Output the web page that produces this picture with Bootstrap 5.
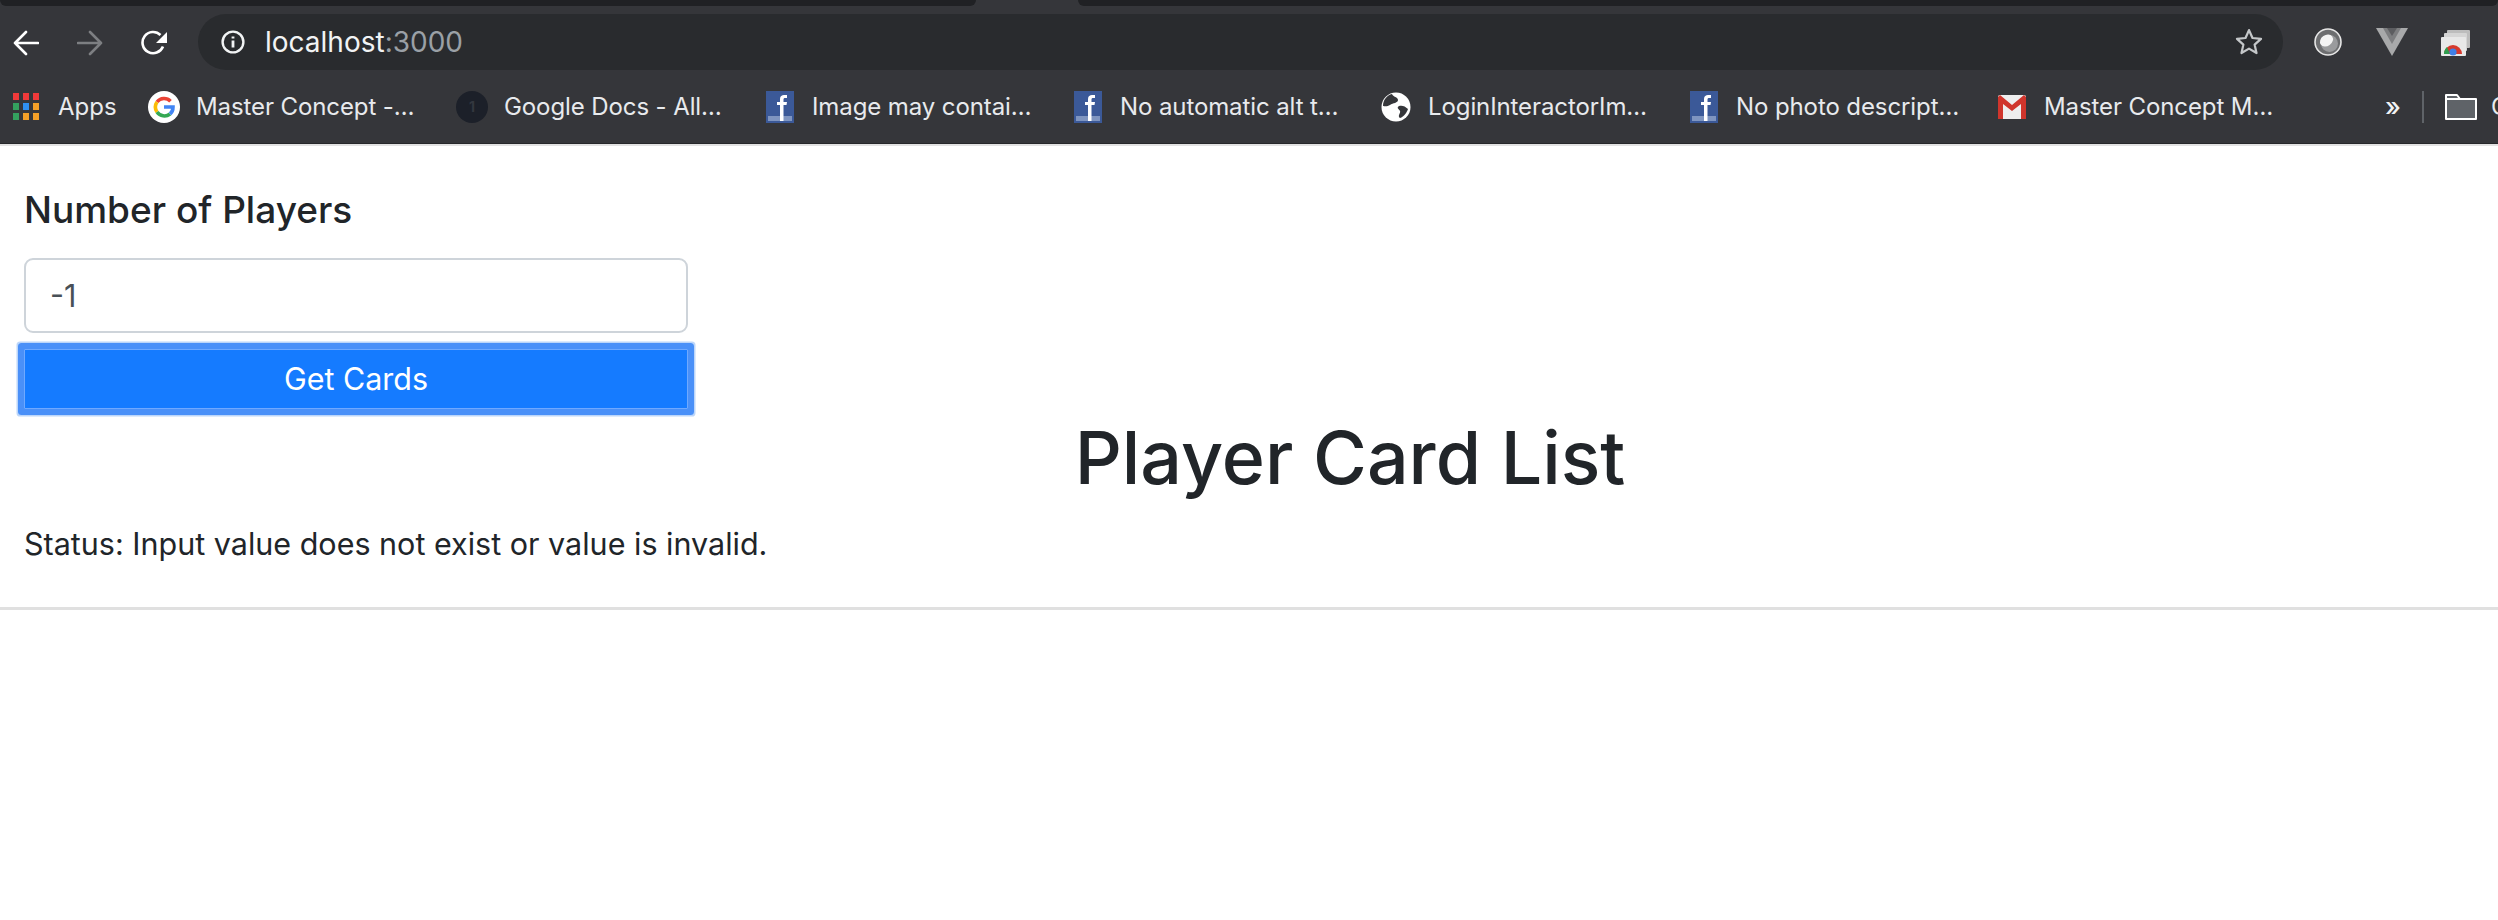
<!DOCTYPE html>
<html lang="en">
<head>
  <meta charset="UTF-8" />
  <title>localhost:3000</title>
  <link href="https://cdn.jsdelivr.net/npm/bootstrap@5.3.2/dist/css/bootstrap.min.css" rel="stylesheet" />
  <style>
    html, body { height: 100%; margin: 0; overflow: hidden; background: #fff; font-family: "Inter", "Liberation Sans", sans-serif; color: #212529; }
    /* browser chrome */
    .tab-strip { height: 6px; background: #35363a; gap: 102px; }
    .tab-dark { height: 6px; background: #202124; border-radius: 0 0 10px 10px; }
    .tab-left { width: 976px; flex: none; }
    .tool-row { height: 64px; background: #35363a; padding-top: 8px; }
    .nav-ico { width: 26px; height: 26px; flex: none; margin-left: 13px; margin-right: 25px; }
    .omni { width: 2085px; margin-left: 6px; height: 56px; flex: none; background: #292b2e; border-radius: 28px; padding-left: 23px; padding-right: 19px; font-size: 28px; color: #f1f3f4; }
    .omni-port { color: #9aa0a6; }
    .ext-ico { flex: none; }
    .book-row { height: 73px; background: #35363a; padding-left: 13px; font-size: 24px; color: #e8eaed; white-space: nowrap; overflow: hidden; }
    .book-apps { width: 135px; flex: none; gap: 19px; }
    .book-item { width: 308px; flex: none; gap: 16px; }
    .book-label { letter-spacing: -0.1px; }
    .book-ico { width: 32px; height: 32px; flex: none; }
    .book-more { margin-left: 81px; width: 37px; flex: none; font-size: 26px; font-weight: 500; color: #f1f3f4; }
    .book-sep { width: 2px; height: 32px; background: #5f6368; flex: none; }
    .book-folder { margin-left: 21px; gap: 14px; flex: none; }
    .chrome-edge { height: 3px; background: #e2e2e2; border-top: 1px solid #26272a; }
    /* page */
    .page-wrap { padding: 37px 24px 0; }
    .form-side { width: 664px; }
    .players-label { font-size: 37px; line-height: 54px; font-weight: 500; margin-bottom: 21px; display: block; }
    .players-input { height: 75px; font-size: 30.5px; padding: 0 24px; border: 2px solid #ced4da; border-radius: 9px; color: #495057; box-shadow: none; }
    .cards-btn { height: 60px; margin-top: 16px; font-size: 30.5px; line-height: 1; background: #157bff; border: 1px solid #6fa9ff; border-radius: 1px; color: #fff; box-shadow: 0 0 0 6px #4a90f8, 0 0 0 7.5px #bcd6fa; }
    .cards-btn:hover { background: #157bff; color: #fff; }
    .title-line { font-size: 73.5px; line-height: 96px; font-weight: 500; margin: 1px 0 0; padding-left: 202px; text-align: center; }
    .status-line { font-size: 30.5px; line-height: 48px; margin: 14px 0 0; }
    .page-rule { margin: 39px 0 0; border: 0; border-top: 3px solid #e0e0e0; opacity: 1; }
  </style>
</head>
<body>
  <div class="tab-strip d-flex">
    <div class="tab-dark tab-left"></div>
    <div class="tab-dark flex-grow-1"></div>
  </div>
  <div class="tool-row d-flex align-items-start">
    <svg class="nav-ico mt-3" viewBox="0 0 26 26" fill="none" stroke="#fff" stroke-width="2.6" stroke-linecap="round" stroke-linejoin="round"><path d="M25 13H2M13 2 2 13l11 11"/></svg>
    <svg class="nav-ico mt-3" viewBox="0 0 26 26" fill="none" stroke="#7d7f82" stroke-width="2.6" stroke-linecap="round" stroke-linejoin="round"><path d="M1 13h23M13 2l11 11-11 11"/></svg>
    <svg class="nav-ico mt-3" viewBox="0 0 26 26" fill="none"><path d="M22 16.5A10.6 10.6 0 1 1 19.5 5" stroke="#fff" stroke-width="2.6"/><path d="M27 1v12H15z" fill="#fff"/></svg>
    <div class="omni d-flex align-items-center">
      <svg width="24" height="24" viewBox="0 0 24 24" fill="none" class="me-3"><circle cx="12" cy="12" r="10.4" stroke="#f1f3f4" stroke-width="2.4"/><path d="M12 10.5v7M12 6.5v2" stroke="#f1f3f4" stroke-width="2.8"/></svg>
      <span class="ms-1">localhost<span class="omni-port">:3000</span></span>
      <svg class="ms-auto" width="30" height="30" viewBox="0 0 24 24" fill="none" stroke="#c4c7c9" stroke-width="1.8" stroke-linejoin="round"><path d="m12 2.5 2.8 6.3 6.8.7-5.1 4.600 1.500 6.700L12 17.300l-6 3.500 1.500-6.700-5.100-4.600 6.800-.7z"/></svg>
    </div>
    <svg class="ext-ico" style="margin-left:31px;margin-top:14px" width="28" height="28" viewBox="0 0 28 28"><circle cx="14" cy="14" r="13" fill="#6d6e70" stroke="#e6e6e6" stroke-width="1.6"/><circle cx="15.5" cy="15.5" r="8.5" fill="#9a9b9d"/><ellipse cx="12.5" cy="12.5" rx="7" ry="5.5" fill="#f4f4f4" transform="rotate(-35 12.5 12.5)"/></svg>
    <svg class="ext-ico" style="margin-left:34px;margin-top:14px" width="32" height="28" viewBox="0 0 32 28"><path d="M0 0h32L16 28z" fill="#a8a9aa"/><path d="M7 0h18l-9 16z" fill="#7d7e80"/><path d="M11 0h10l-5 8z" fill="#35363a" opacity=".45"/></svg>
    <svg class="ext-ico" style="margin-left:33px;margin-top:15px" width="30" height="27" viewBox="0 0 30 27"><rect x="6" y="1" width="23" height="18" rx="1" fill="#bdbdbd"/><rect x="3" y="4" width="23" height="18" rx="1" fill="#d5d5d5"/><rect y="8" width="25" height="19" rx="1" fill="#e8e8e8"/><path d="M3 25a9 9 0 0 1 18 0z" fill="#d6392d"/><path d="M3 25a9 9 0 0 1 3-7l3 7z" fill="#2f9e4f"/><path d="M15 25a3 3 0 1 0-6 0z" fill="#fff"/><circle cx="12" cy="23" r="3.6" fill="#3f7fe6"/></svg>
  </div>
  <div class="book-row d-flex align-items-center">
    <div class="book-apps d-flex align-items-center">
      <svg width="26" height="27" viewBox="0 0 26 27">
        <rect width="6" height="7" fill="#f03a3a"/><rect x="10" width="6" height="7" fill="#f03a3a"/><rect x="20" width="6" height="7" fill="#f03a3a"/>
        <rect y="10" width="6" height="7" fill="#34a05f"/><rect x="10" y="10" width="6" height="7" fill="#2f8ff0"/><rect x="20" y="10" width="6" height="7" fill="#f4a028"/>
        <rect y="20" width="6" height="7" fill="#34a05f"/><rect x="10" y="20" width="6" height="7" fill="#f4a028"/><rect x="20" y="20" width="6" height="7" fill="#f4a028"/>
      </svg>
      <span>Apps</span>
    </div>
    <div class="book-item d-flex align-items-center">
      <svg class="book-ico" viewBox="0 0 32 32" fill="none"><circle cx="16" cy="16" r="16" fill="#fff"/><path d="M22.5 10.2A9 9 0 0 0 9 11" stroke="#ea4335" stroke-width="3.6"/><path d="M9 11a9 9 0 0 0 0 10" stroke="#fbbc05" stroke-width="3.6"/><path d="M9 21a9 9 0 0 0 13 2" stroke="#34a853" stroke-width="3.6"/><path d="M16 16h9c0 3-1 5.5-3 7" stroke="#4285f4" stroke-width="3.6"/></svg>
      <span class="book-label">Master Concept -…</span>
    </div>
    <div class="book-item d-flex align-items-center">
      <svg class="book-ico" viewBox="0 0 32 32"><circle cx="16" cy="16" r="16" fill="#1c2029"/><text x="16" y="21" text-anchor="middle" font-size="14" font-weight="700" fill="#33373f">1</text></svg>
      <span class="book-label">Google Docs - All…</span>
    </div>
    <div class="book-item d-flex align-items-center">
      <svg class="book-ico" viewBox="0 0 32 32"><rect x="2" width="28" height="32" fill="#3b5998"/><rect x="4" y="25" width="24" height="5" fill="#7f95c0"/><path d="M16 30V14h-3v-3h3V8c0-3 2-4 4-4h3v3h-2c-1 0-1.5.5-1.5 1.5V11h3.500l-.5 3h-3v16z" fill="#fff"/></svg>
      <span class="book-label">Image may contai…</span>
    </div>
    <div class="book-item d-flex align-items-center">
      <svg class="book-ico" viewBox="0 0 32 32"><rect x="2" width="28" height="32" fill="#3b5998"/><rect x="4" y="25" width="24" height="5" fill="#7f95c0"/><path d="M16 30V14h-3v-3h3V8c0-3 2-4 4-4h3v3h-2c-1 0-1.5.5-1.5 1.5V11h3.500l-.5 3h-3v16z" fill="#fff"/></svg>
      <span class="book-label">No automatic alt t…</span>
    </div>
    <div class="book-item d-flex align-items-center">
      <svg class="book-ico" viewBox="0 0 32 32"><circle cx="16" cy="16" r="14.5" fill="#fff"/><path d="M12 3c1 3 6 3 6 6s-5 3-8 5-6 1-7 1c0-6 4-11 9-12zM19 15c3-1 6 0 9 3-1 3-4 8-8 9-3-2 1-5 0-7s-4-3-1-5z" fill="#35363a"/></svg>
      <span class="book-label">LoginInteractorIm…</span>
    </div>
    <div class="book-item d-flex align-items-center">
      <svg class="book-ico" viewBox="0 0 32 32"><rect x="2" width="28" height="32" fill="#3b5998"/><rect x="4" y="25" width="24" height="5" fill="#7f95c0"/><path d="M16 30V14h-3v-3h3V8c0-3 2-4 4-4h3v3h-2c-1 0-1.5.5-1.5 1.5V11h3.500l-.5 3h-3v16z" fill="#fff"/></svg>
      <span class="book-label">No photo descript…</span>
    </div>
    <div class="book-item d-flex align-items-center">
      <svg class="book-ico" viewBox="0 0 32 32"><rect x="2" y="4" width="28" height="24" rx="2" fill="#eeeeee"/><path d="M2 6v22h5V13l9 7 9-7v15h5V6l-2-2-12 10L4 4z" fill="#d0352c"/></svg>
      <span class="book-label">Master Concept M…</span>
    </div>
    <span class="book-more">»</span>
    <div class="book-sep"></div>
    <div class="book-folder d-flex align-items-center">
      <svg width="32" height="26" viewBox="0 0 32 26"><path d="M1 25V1h11l3 4h16v20z" fill="#5f6368" stroke="#fff" stroke-width="2" stroke-linejoin="round"/><path d="M1 5h30" stroke="#fff" stroke-width="2"/></svg>
      <span>Other</span>
    </div>
  </div>
  <div class="chrome-edge"></div>

  <div class="page-wrap">
    <div class="form-side">
      <label class="players-label" for="playerCount">Number of Players</label>
      <input id="playerCount" class="form-control players-input" type="text" value="-1" />
      <button type="button" class="btn btn-primary w-100 cards-btn">Get Cards</button>
    </div>
    <h1 class="title-line">Player Card List</h1>
    <p class="status-line">Status: Input value does not exist or value is invalid.</p>
  </div>
  <hr class="page-rule" />
  <script src="https://cdn.jsdelivr.net/npm/bootstrap@5.3.2/dist/js/bootstrap.bundle.min.js"></script>
</body>
</html>
